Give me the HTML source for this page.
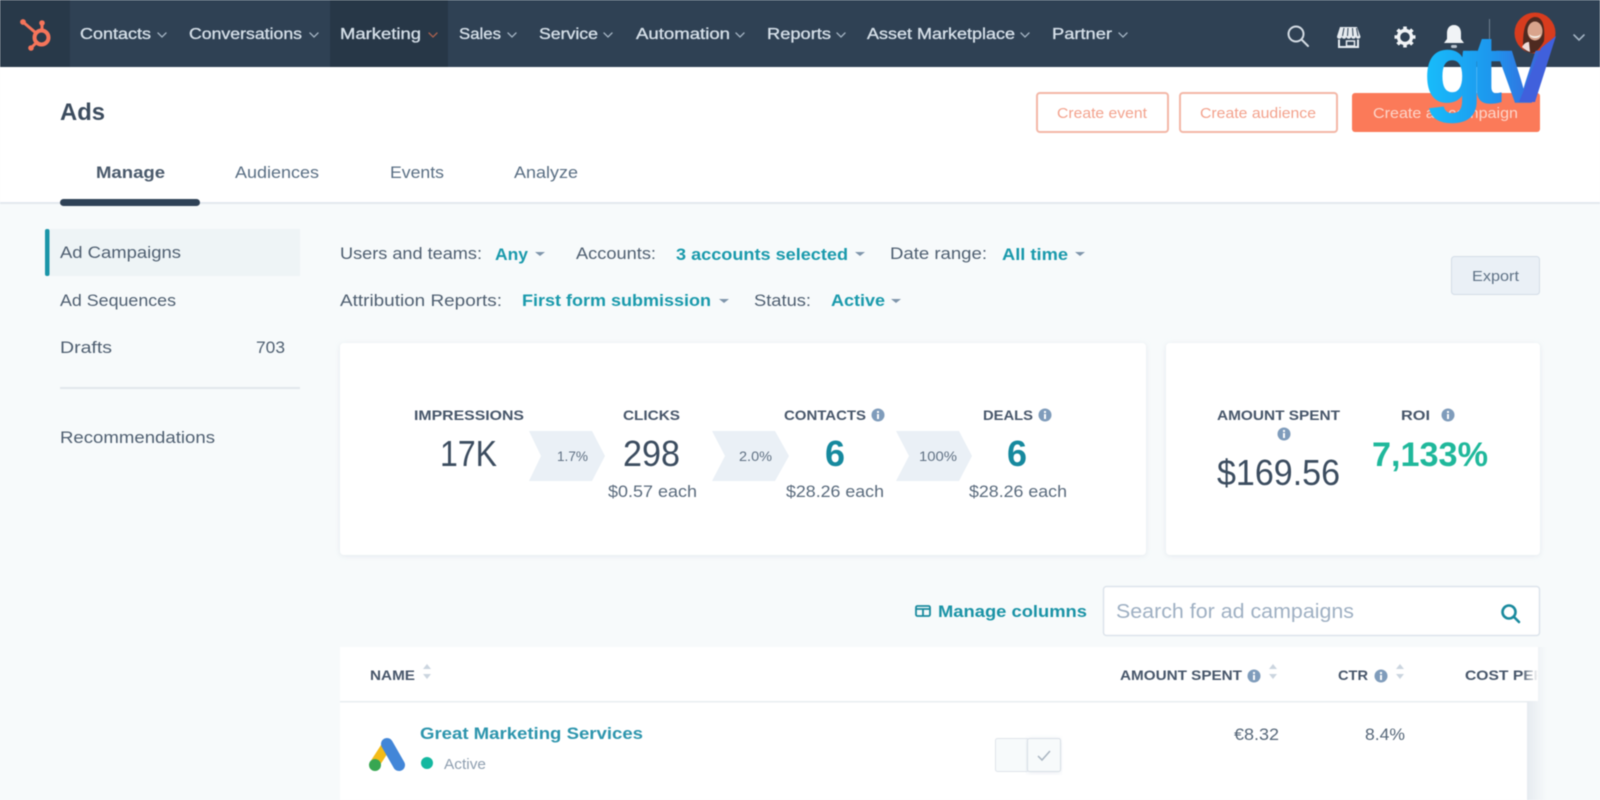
<!DOCTYPE html>
<html><head><meta charset="utf-8"><title>Ads</title>
<style>
html,body{margin:0;padding:0;width:1600px;height:800px;overflow:hidden;background:#f7fafb}
#root{display:block;filter:blur(.6px)}
text{font-family:"Liberation Sans",sans-serif;}
.nav{font-size:16px;fill:#d5dfe8;stroke:#d5dfe8;stroke-width:.35px}
.tab{font-size:17px;fill:#5a6f84}
.side{font-size:17px;fill:#4f5f71}
.lab{font-size:16.5px;fill:#4f5f71}
.val{font-size:16.5px;font-weight:bold;fill:#1a9aac}
.hd{font-size:14px;font-weight:bold;fill:#47566a}
.big{font-size:36px;fill:#3b4c5f}
.sub{font-size:16.5px;fill:#5a6b7d}
.pct{font-size:14px;fill:#5f7083}
.six{font-size:36px;font-weight:bold;fill:#16899e}
</style></head><body>
<svg id="root" width="1600" height="800" viewBox="0 0 1600 800" xmlns="http://www.w3.org/2000/svg">
<defs>
<linearGradient id="gt" gradientUnits="userSpaceOnUse" x1="1425" y1="0" x2="1556" y2="0"><stop offset="0" stop-color="#18bdfb"/><stop offset=".5" stop-color="#1d97ee"/><stop offset="1" stop-color="#4258d6"/></linearGradient>
<linearGradient id="fade" x1="0" x2="1" y1="0" y2="0"><stop offset="0" stop-color="#fff" stop-opacity="0"/><stop offset="1" stop-color="#fff"/></linearGradient>
<linearGradient id="shade" x1="0" x2="1" y1="0" y2="0"><stop offset="0" stop-color="#e6ebf0"/><stop offset="1" stop-color="#f7fafb"/></linearGradient>
<filter id="sh" x="-5%" y="-10%" width="110%" height="120%"><feDropShadow dx="0" dy="1" stdDeviation="3" flood-color="#b9c6d4" flood-opacity=".32"/></filter>
<clipPath id="costclip"><rect x="1460" y="660" width="78" height="30"/></clipPath>
</defs>

<rect width="1600" height="800" fill="#f7fafb"/>
<!-- header -->
<rect y="67" width="1600" height="136" fill="#fff"/>
<rect y="202" width="1600" height="2" fill="#e3e8ee"/>
<rect width="1600" height="67" fill="#2f4154"/>
<rect width="70" height="67" fill="#283949"/>
<rect x="330" width="118" height="67" fill="#273747"/>

<!-- hubspot logo -->
<g stroke="#f5745a" fill="none" stroke-linecap="round">
<circle cx="41.5" cy="37.5" r="7" stroke-width="4"/>
<path d="M23 22L36 33" stroke-width="3"/><path d="M42 24V30" stroke-width="3"/><path d="M31 48L37 42" stroke-width="3"/>
<circle cx="23" cy="22" r="2.4" fill="#f5745a" stroke-width="1"/><circle cx="42" cy="23" r="2.3" fill="#f5745a" stroke-width="1"/><circle cx="31" cy="48" r="2.3" fill="#f5745a" stroke-width="1"/>
</g>

<!-- nav -->
<g class="nav">
<text x="80" y="39" textLength="71" lengthAdjust="spacingAndGlyphs">Contacts</text>
<text x="189" y="39" textLength="113" lengthAdjust="spacingAndGlyphs">Conversations</text>
<text x="340" y="39" textLength="81" lengthAdjust="spacingAndGlyphs">Marketing</text>
<text x="459" y="39" textLength="42" lengthAdjust="spacingAndGlyphs">Sales</text>
<text x="539" y="39" textLength="59" lengthAdjust="spacingAndGlyphs">Service</text>
<text x="636" y="39" textLength="94" lengthAdjust="spacingAndGlyphs">Automation</text>
<text x="767" y="39" textLength="64" lengthAdjust="spacingAndGlyphs">Reports</text>
<text x="867" y="39" textLength="148" lengthAdjust="spacingAndGlyphs">Asset Marketplace</text>
<text x="1052" y="39" textLength="60" lengthAdjust="spacingAndGlyphs">Partner</text>
</g>
<g fill="none" stroke="#a3b3c2" stroke-width="1.3" stroke-linecap="round">
<path d="M158 33l4 4 4-4M310 33l4 4 4-4M508 33l4 4 4-4M604 33l4 4 4-4M736 33l4 4 4-4M837 33l4 4 4-4M1021 33l4 4 4-4M1119 33l4 4 4-4"/>
<path d="M429 33l4 4 4-4" stroke="#a8604e"/>
<path d="M1574 35l5 5 5-5" stroke-width="1.6"/>
</g>

<!-- top right icons -->
<g fill="none" stroke="#d3dbe3" stroke-width="2" stroke-linecap="round">
<circle cx="1296" cy="34" r="7.5"/><path d="M1302 40l6 6"/>
</g>
<!-- store -->
<path d="M1340 27h17l3.500 9.500c0 3-4.700 3-4.700 0 0 3-4.700 3-4.700 0 0 3-4.700 3-4.700 0 0 3-4.700 3-4.700 0 0 3-4.700 3-4.700 0z" fill="#e6ebf0"/>
<path d="M1344 28l-1.500 8M1348 28l-.5 8M1352.500 28l.5 8M1356.500 28l1.500 8" stroke="#2f4154" stroke-width="1"/>
<path d="M1339 39.500V47h19v-7.500" fill="none" stroke="#e6ebf0" stroke-width="2"/>
<rect x="1346.500" y="41" width="8" height="5" fill="none" stroke="#e6ebf0" stroke-width="1.500"/>
<g transform="translate(1405 37)">
<circle r="6.500" fill="none" stroke="#f0f3f6" stroke-width="3.400"/>
<g stroke="#f0f3f6" stroke-width="3.600" stroke-linecap="butt"><path d="M0-10.500V-7M0 7V10.500M-10.500 0H-7M7 0H10.500M-7.400-7.400L-5-5M5 5L7.400 7.400M7.400-7.400L5-5M-5 5L-7.400 7.400"/></g>
</g>
<path d="M1454 25c-5 0-7 4-7 8v6l-3 4h20l-3-4v-6c0-4-2-8-7-8z" fill="#f0f3f6"/>
<rect x="1451" y="45" width="6" height="3" rx="1.500" fill="#b9c4cf"/>
<rect x="1489" y="19" width="1" height="26" fill="#6c7d8e"/>
<!-- avatar -->
<circle cx="1535" cy="33" r="20.500" fill="#d83c1e"/>
<path d="M1523 48c0-12 0-28 11-31 10-1 11 12 10 24-3 6-8 12-12 12-4 0-7-2-9-5z" fill="#4e2a20"/>
<ellipse cx="1535" cy="31" rx="7.500" ry="9.500" fill="#d9a48c"/>
<path d="M1529 34c3 3 9 3 12 0-1 3-3 4-6 4s-5-1-6-4z" fill="#f4efe8"/>
<path d="M1522 47c2-4 5-5 7-5l1 10c-3-1-6-3-8-5z" fill="#efdcd8"/>

<!-- title -->
<text x="60" y="120" font-size="24" font-weight="bold" fill="#3c4c5e" textLength="45" lengthAdjust="spacingAndGlyphs">Ads</text>
<text x="96" y="178" font-size="17" font-weight="bold" fill="#4a5a6c" textLength="69" lengthAdjust="spacingAndGlyphs">Manage</text>
<text class="tab" x="235" y="178" textLength="84" lengthAdjust="spacingAndGlyphs">Audiences</text>
<text class="tab" x="390" y="178" textLength="54" lengthAdjust="spacingAndGlyphs">Events</text>
<text class="tab" x="514" y="178" textLength="64" lengthAdjust="spacingAndGlyphs">Analyze</text>
<rect x="60" y="199" width="140" height="7" rx="3.500" fill="#2f4257"/>

<!-- buttons -->
<rect x="1037" y="93" width="131" height="39" rx="3" fill="#fff" stroke="#f3b7a7" stroke-width="2"/>
<text x="1057" y="118" font-size="15" fill="#f3a28d" textLength="90" lengthAdjust="spacingAndGlyphs">Create event</text>
<rect x="1180" y="93" width="157" height="39" rx="3" fill="#fff" stroke="#f3b7a7" stroke-width="2"/>
<text x="1200" y="118" font-size="15" fill="#f3a28d" textLength="116" lengthAdjust="spacingAndGlyphs">Create audience</text>
<rect x="1352" y="93" width="188" height="39" rx="3" fill="#fb7a59"/>
<text x="1373" y="118" font-size="15" fill="#fcd5c9" textLength="145" lengthAdjust="spacingAndGlyphs">Create ad campaign</text>

<!-- sidebar -->
<rect x="46" y="229" width="254" height="47" fill="#eef4f6"/>
<rect x="45" y="229" width="4.500" height="47" rx="2" fill="#1a95a8"/>
<text class="side" x="60" y="258" textLength="121" lengthAdjust="spacingAndGlyphs">Ad Campaigns</text>
<text class="side" x="60" y="306" textLength="116" lengthAdjust="spacingAndGlyphs">Ad Sequences</text>
<text class="side" x="60" y="353" textLength="52" lengthAdjust="spacingAndGlyphs">Drafts</text>
<text class="side" x="256" y="353" textLength="29" lengthAdjust="spacingAndGlyphs">703</text>
<rect x="60" y="387" width="240" height="2" fill="#e2e7ec"/>
<text class="side" x="60" y="443" textLength="155" lengthAdjust="spacingAndGlyphs">Recommendations</text>

<!-- filters -->
<text class="lab" x="340" y="259" textLength="142" lengthAdjust="spacingAndGlyphs">Users and teams:</text>
<text class="val" x="495" y="260" textLength="33" lengthAdjust="spacingAndGlyphs">Any</text>
<text class="lab" x="576" y="259" textLength="80" lengthAdjust="spacingAndGlyphs">Accounts:</text>
<text class="val" x="676" y="260" textLength="172" lengthAdjust="spacingAndGlyphs">3 accounts selected</text>
<text class="lab" x="890" y="259" textLength="97" lengthAdjust="spacingAndGlyphs">Date range:</text>
<text class="val" x="1002" y="260" textLength="66" lengthAdjust="spacingAndGlyphs">All time</text>
<text class="lab" x="340" y="306" textLength="162" lengthAdjust="spacingAndGlyphs">Attribution Reports:</text>
<text class="val" x="522" y="306" textLength="189" lengthAdjust="spacingAndGlyphs">First form submission</text>
<text class="lab" x="754" y="306" textLength="57" lengthAdjust="spacingAndGlyphs">Status:</text>
<text class="val" x="831" y="306" textLength="54" lengthAdjust="spacingAndGlyphs">Active</text>
<g fill="#7f95ab"><path d="M535 252h10l-5 4zM855 252h10l-5 4zM1075 252h10l-5 4zM719 299h10l-5 4zM891 299h10l-5 4z"/></g>

<!-- export -->
<rect x="1451.500" y="256.500" width="88" height="38" rx="3" fill="#eaf0f6" stroke="#d3dde7"/>
<text x="1472" y="281" font-size="14.500" fill="#5f7286" textLength="47" lengthAdjust="spacingAndGlyphs">Export</text>

<!-- cards -->
<rect x="340" y="343" width="806" height="212" rx="4" fill="#fff" filter="url(#sh)"/>
<rect x="1166" y="343" width="374" height="212" rx="4" fill="#fff" filter="url(#sh)"/>

<g fill="#eaf0f6">
<path d="M529 431h63l13 25-13 25h-63l12-25z"/>
<path d="M712 431h63l14 25-14 25h-63l13-25z"/>
<path d="M896 431h63l13 25-13 25h-63l13-25z"/>
</g>
<text class="pct" x="557" y="461" textLength="31" lengthAdjust="spacingAndGlyphs">1.7%</text>
<text class="pct" x="739" y="461" textLength="33" lengthAdjust="spacingAndGlyphs">2.0%</text>
<text class="pct" x="919" y="461" textLength="38" lengthAdjust="spacingAndGlyphs">100%</text>

<text class="hd" x="414" y="420" textLength="110" lengthAdjust="spacingAndGlyphs">IMPRESSIONS</text>
<text class="hd" x="623" y="420" textLength="57" lengthAdjust="spacingAndGlyphs">CLICKS</text>
<text class="hd" x="784" y="420" textLength="82" lengthAdjust="spacingAndGlyphs">CONTACTS</text>
<text class="hd" x="983" y="420" textLength="50" lengthAdjust="spacingAndGlyphs">DEALS</text>
<text class="big" x="440" y="466" textLength="57" lengthAdjust="spacingAndGlyphs">17K</text>
<text class="big" x="623" y="466" textLength="57" lengthAdjust="spacingAndGlyphs">298</text>
<text class="six" x="825" y="466" textLength="20" lengthAdjust="spacingAndGlyphs">6</text>
<text class="six" x="1007" y="466" textLength="20" lengthAdjust="spacingAndGlyphs">6</text>
<text class="sub" x="608" y="497" textLength="89" lengthAdjust="spacingAndGlyphs">$0.57 each</text>
<text class="sub" x="786" y="497" textLength="98" lengthAdjust="spacingAndGlyphs">$28.26 each</text>
<text class="sub" x="969" y="497" textLength="98" lengthAdjust="spacingAndGlyphs">$28.26 each</text>

<text class="hd" x="1217" y="420" textLength="123" lengthAdjust="spacingAndGlyphs">AMOUNT SPENT</text>
<text class="hd" x="1401" y="420" textLength="29" lengthAdjust="spacingAndGlyphs">ROI</text>
<text class="big" x="1217" y="485" textLength="123" lengthAdjust="spacingAndGlyphs">$169.56</text>
<text x="1372" y="466" font-size="34" font-weight="bold" fill="#1fb89b" textLength="116" lengthAdjust="spacingAndGlyphs">7,133%</text>

<!-- manage columns / search -->
<g fill="none" stroke="#1a8a9e" stroke-width="1.800"><rect x="916" y="606" width="14" height="10" rx="1.500"/><path d="M916 609h14M923 609v7"/></g>
<text x="938" y="617" font-size="16.500" font-weight="bold" fill="#1a93a6" textLength="149" lengthAdjust="spacingAndGlyphs">Manage columns</text>
<rect x="1103.500" y="586.500" width="436" height="49" rx="3" fill="#fff" stroke="#dde4eb" stroke-width="1.500"/>
<text x="1116" y="618" font-size="20" fill="#9fb0c3" textLength="238" lengthAdjust="spacingAndGlyphs">Search for ad campaigns</text>
<g fill="none" stroke="#1a8a9e" stroke-width="2.600" stroke-linecap="round"><circle cx="1509" cy="612" r="6.500"/><path d="M1514 617l5 5"/></g>

<!-- table -->
<rect x="1527" y="647" width="20" height="153" fill="url(#shade)"/>
<rect x="340" y="647" width="1187" height="153" fill="#fff"/>
<rect x="1527" y="647" width="11" height="54" fill="#fff"/>
<rect x="340" y="701" width="1187" height="1.500" fill="#e9edf1"/>
<text class="hd" x="370" y="680" textLength="45" lengthAdjust="spacingAndGlyphs">NAME</text>
<text class="hd" x="1120" y="680" textLength="122" lengthAdjust="spacingAndGlyphs">AMOUNT SPENT</text>
<text class="hd" x="1338" y="680" textLength="30" lengthAdjust="spacingAndGlyphs">CTR</text>
<g clip-path="url(#costclip)"><text class="hd" x="1465" y="680" textLength="80" lengthAdjust="spacingAndGlyphs">COST PER</text></g>
<rect x="1522" y="662" width="16" height="26" fill="url(#fade)"/>
<g fill="#cbd5df"><path d="M423 669l4-5 4 5zM423 674l4 5 4-5zM1269 669l4-5 4 5zM1269 674l4 5 4-5zM1396 669l4-5 4 5zM1396 674l4 5 4-5z"/></g>

<!-- info icons -->
<g fill="#7f9cbb">
<circle cx="878" cy="415" r="6.500"/><circle cx="1045" cy="415" r="6.500"/><circle cx="1284" cy="434" r="6.500"/><circle cx="1448" cy="415" r="6.500"/><circle cx="1254" cy="676" r="6.500"/><circle cx="1381" cy="676" r="6.500"/>
</g>
<g fill="#fff">
<rect x="877" y="414" width="2" height="5"/><rect x="877" y="411" width="2" height="2"/>
<rect x="1044" y="414" width="2" height="5"/><rect x="1044" y="411" width="2" height="2"/>
<rect x="1283" y="433" width="2" height="5"/><rect x="1283" y="430" width="2" height="2"/>
<rect x="1447" y="414" width="2" height="5"/><rect x="1447" y="411" width="2" height="2"/>
<rect x="1253" y="675" width="2" height="5"/><rect x="1253" y="672" width="2" height="2"/>
<rect x="1380" y="675" width="2" height="5"/><rect x="1380" y="672" width="2" height="2"/>
</g>

<!-- row -->
<g stroke-linecap="round" fill="none">
<path d="M376 762L387 745" stroke="#f4bb17" stroke-width="10"/>
<path d="M387 744L399 765" stroke="#4286d8" stroke-width="12"/>
</g>
<circle cx="375" cy="765" r="6" fill="#37a651"/>
<text x="420" y="739" font-size="17" font-weight="bold" fill="#2d95ad" textLength="223" lengthAdjust="spacingAndGlyphs">Great Marketing Services</text>
<circle cx="427" cy="763" r="6" fill="#14b8a0"/>
<text x="444" y="769" font-size="14.500" fill="#8f9fb0" textLength="42" lengthAdjust="spacingAndGlyphs">Active</text>
<rect x="995.500" y="738.500" width="33" height="33" rx="2" fill="#f7fafb" stroke="#dfe5eb"/>
<rect x="1027.500" y="738.500" width="33" height="33" rx="2" fill="#f7fafb" stroke="#d8dfe6" filter="url(#sh)"/>
<path d="M1038 756l4 4 8-9" fill="none" stroke="#a9b5c1" stroke-width="1.500"/>
<text x="1234" y="740" font-size="16.500" fill="#566779" textLength="45" lengthAdjust="spacingAndGlyphs">€8.32</text>
<text x="1365" y="740" font-size="16.500" fill="#566779" textLength="40" lengthAdjust="spacingAndGlyphs">8.4%</text>

<!-- gtv watermark -->
<text y="102" font-size="96" font-weight="bold" fill="url(#gt)" stroke="url(#gt)" stroke-width="1.500"><tspan x="1424">g</tspan><tspan x="1470">t</tspan><tspan x="1497">v</tspan></text>
<path d="M1556 36L1535 102H1519L1541 48z" fill="#4060dc"/>
</svg>
</body></html>
